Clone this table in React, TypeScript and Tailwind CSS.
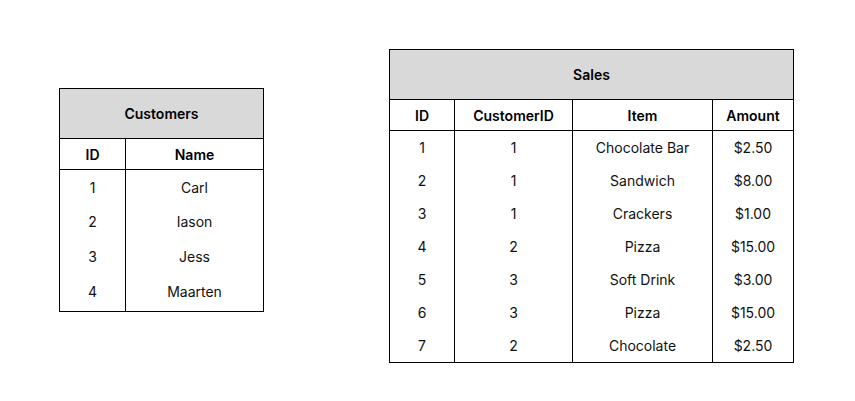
import React from "react";

const customers = [
  ["1", "Carl"],
  ["2", "Iason"],
  ["3", "Jess"],
  ["4", "Maarten"],
];

const sales = [
  ["1", "1", "Chocolate Bar", "$2.50"],
  ["2", "1", "Sandwich", "$8.00"],
  ["3", "1", "Crackers", "$1.00"],
  ["4", "2", "Pizza", "$15.00"],
  ["5", "3", "Soft Drink", "$3.00"],
  ["6", "3", "Pizza", "$15.00"],
  ["7", "2", "Chocolate", "$2.50"],
];

const font = { fontFamily: "Inter, 'Noto Sans', sans-serif" };

const custRowH = ["h-[34px]", "h-[35px]", "h-[35px]", "h-[35px]"];

function Customers() {
  const widths = ["w-[66px] border-r border-black", "flex-1"];
  return (
    <div className="w-[205px] border border-black mt-[88px] shrink-0">
      <div className="h-[50px] bg-[#d9d9d9] border-b border-black flex items-center justify-center text-[14px] font-semibold text-black">
        Customers
      </div>
      <div className="h-[31px] border-b border-black flex text-[14px] font-semibold text-black">
        {["ID", "Name"].map((h, i) => (
          <div key={h} className={`${widths[i]} flex items-center justify-center`}>
            {h}
          </div>
        ))}
      </div>
      <div className="h-[141px] flex flex-col">
        {customers.map((r, ri) => (
          <div key={ri} className={`${custRowH[ri]} flex text-[14px] text-[#111]`}>
            {r.map((c, i) => (
              <div key={i} className={`${widths[i]} flex items-center justify-center`}>
                {c}
              </div>
            ))}
          </div>
        ))}
        <div className="flex-1 flex">
          <div className={widths[0]} />
          <div className={widths[1]} />
        </div>
      </div>
    </div>
  );
}

function Sales() {
  const widths = [
    "w-[65px] border-r border-black",
    "w-[118px] border-r border-black",
    "w-[140px] border-r border-black",
    "flex-1",
  ];
  return (
    <div className="w-[405px] border border-black mt-[49px] shrink-0">
      <div className="h-[50px] bg-[#d9d9d9] border-b border-black flex items-center justify-center text-[14px] font-semibold text-black">
        Sales
      </div>
      <div className="h-[31px] border-b border-black flex text-[14px] font-semibold text-black">
        {["ID", "CustomerID", "Item", "Amount"].map((h, i) => (
          <div key={h} className={`${widths[i]} flex items-center justify-center`}>
            {h}
          </div>
        ))}
      </div>
      {sales.map((r, ri) => (
        <div key={ri} className="h-[33px] flex text-[14px] text-[#111]">
          {r.map((c, i) => (
            <div key={i} className={`${widths[i]} flex items-center justify-center`}>
              {c}
            </div>
          ))}
        </div>
      ))}
    </div>
  );
}

export default function App() {
  return (
    <div className="w-[855px] h-[401px] bg-white flex items-start pl-[59px] gap-[125px]" style={font}>
      <Customers />
      <Sales />
    </div>
  );
}
